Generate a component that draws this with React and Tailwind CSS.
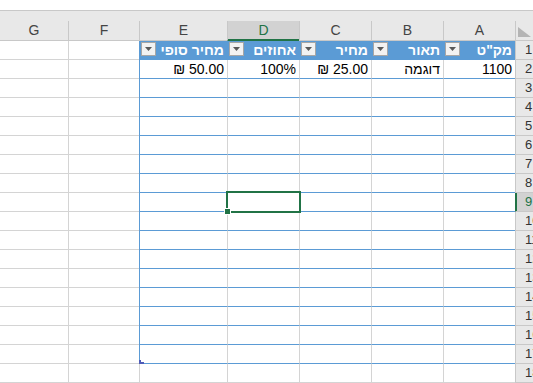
import React from 'react';

const columns = [
  { key: 'G', head: 'w-[68px] border-b border-[#c8c8c8]' },
  { key: 'F', head: 'w-[71px] border-l border-b border-[#c8c8c8]' },
  { key: 'E', head: 'w-[88px] border-l border-b border-[#c8c8c8]' },
  { key: 'D', head: 'w-[72px] border-l border-[#c8c8c8] bg-[#d2d2d2] text-[#217346] border-b border-b-[#217346] shadow-[inset_0_-1px_0_#217346]' },
  { key: 'C', head: 'w-[72px] border-l border-b border-[#c8c8c8]' },
  { key: 'B', head: 'w-[72px] border-l border-b border-[#c8c8c8]' },
  { key: 'A', head: 'w-[72px] border-l border-b border-[#c8c8c8]' },
];

const widths = {
  E: 'w-[88px]',
  D: 'w-[72px]',
  C: 'w-[72px]',
  B: 'w-[72px]',
  A: 'w-[72px]',
};

const headers = { E: 'מחיר סופי', D: 'אחוזים', C: 'מחיר', B: 'תאור', A: 'מק"ט' };
const values = { E: '₪ 50.00', D: '100%', C: '₪ 25.00', B: 'דוגמה', A: '1100' };
const tableCols = ['E', 'D', 'C', 'B', 'A'];
const rows = Array.from({ length: 18 }, (_, i) => i + 1);

function FilterButton() {
  return (
    <div className="mt-[1px] ml-[1px] flex h-[14px] w-[15px] shrink-0 items-center justify-center border border-[#a6a6a6] bg-[#f2f2f2]">
      <svg width="7" height="4" viewBox="0 0 7 4">
        <path d="M0 0h7L3.5 4z" fill="#595959" />
      </svg>
    </div>
  );
}

function TableCell({ col, r }) {
  const w = widths[col];
  if (r === 18) {
    return <div className={`${w} shrink-0 border-l border-b border-[#d4d4d4]`} />;
  }
  if (r === 1) {
    return (
      <div className={`${w} flex shrink-0 items-start justify-between border-l border-b border-[#5b9bd5] bg-[#5b9bd5] pr-[3px]`}>
        <FilterButton />
        <span dir="rtl" className="whitespace-nowrap font-bold text-white">{headers[col]}</span>
      </div>
    );
  }
  const side = col === 'E' ? 'border-l border-l-[#5b9bd5]' : 'border-l border-l-[#d4d4d4]';
  return (
    <div className={`${w} relative shrink-0 ${side} border-b border-b-[#5b9bd5] pr-[3px] text-right text-black`}>
      {r === 2 && <span className="whitespace-nowrap">{values[col]}</span>}
      {r === 9 && col === 'D' && (
        <div className="absolute -left-[2px] -top-[2px] z-10 h-[22px] w-[75px] border-2 border-[#217346]">
          <div className="absolute -bottom-[4px] -left-[4px] h-[7px] w-[7px] border border-white bg-[#217346]" />
        </div>
      )}
      {r === 17 && col === 'E' && (
        <svg className="absolute -bottom-[1px] -left-[1px] z-10" width="5" height="4" viewBox="0 0 5 4">
          <path d="M0 0h2v2h3v2H0z" fill="#4f5cb8" />
        </svg>
      )}
    </div>
  );
}

function Row({ r }) {
  const selected = r === 9;
  return (
    <div className="flex h-[19px]">
      <div className="w-[68px] shrink-0 border-b border-[#d4d4d4]" />
      <div className="w-[71px] shrink-0 border-l border-b border-[#d4d4d4]" />
      {tableCols.map((c) => (
        <TableCell key={c} col={c} r={r} />
      ))}
      <div
        className={
          selected
            ? 'w-[18px] shrink-0 overflow-hidden whitespace-nowrap border-l border-b border-[#c8c8c8] border-l-[#217346] bg-[#d2d2d2] pl-[9px] text-[13px] text-[#217346] shadow-[inset_1px_0_0_#217346]'
            : 'w-[18px] shrink-0 overflow-hidden whitespace-nowrap border-l border-b border-[#c8c8c8] bg-[#e8e8e8] pl-[9px] text-[13px] text-[#333333]'
        }
      >
        {r}
      </div>
    </div>
  );
}

export default function App() {
  return (
    <div className="h-[383px] w-[533px] overflow-hidden bg-white font-[Liberation_Sans,DejaVu_Sans,Arial,sans-serif] text-[14px] leading-[18px]">
      <div className="h-[10px] bg-white" />
      <div className="h-[11px] border-t border-[#c8c8c8] bg-[#e8e8e8]" />
      <div className="flex h-[20px] bg-[#e8e8e8] leading-[19px] text-[#444444]">
        {columns.map((c) => (
          <div key={c.key} className={`${c.head} shrink-0 text-center`}>
            {c.key}
          </div>
        ))}
        <div className="flex w-[18px] shrink-0 items-end border-l border-b border-[#c8c8c8] pb-[3px] pl-[2px]">
          <svg width="13" height="10" viewBox="0 0 13 10">
            <path d="M0 0v10h13z" fill="#b4b4b4" />
          </svg>
        </div>
      </div>
      {rows.map((r) => (
        <Row key={r} r={r} />
      ))}
    </div>
  );
}
